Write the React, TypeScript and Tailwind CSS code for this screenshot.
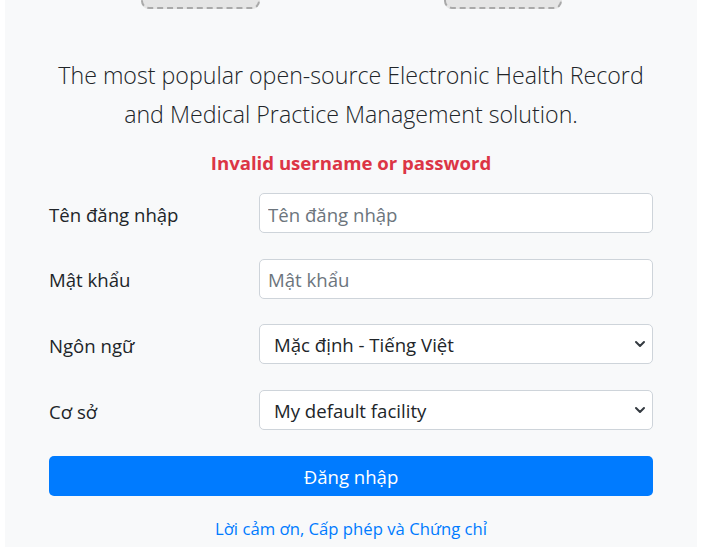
import { ChevronDown } from 'lucide-react';

const font = { fontFamily: '"Open Sans", "Noto Sans", sans-serif' };

function Field({ label, placeholder }: { label: string; placeholder: string }) {
    return (
        <div className="flex items-center h-[40px]">
            <label className="w-[210px] shrink-0 pt-[3px] text-[18.6px] text-[#212529]">{label}</label>
            <input
                className="flex-1 h-full bg-white border border-[#ced4da] rounded-[5px] pl-[8px] pt-[2px] text-[18.6px] text-[#495057] placeholder:text-[#6c757d] outline-none"
                placeholder={placeholder}
            />
        </div>
    );
}

function Select({ label, value }: { label: string; value: string }) {
    return (
        <div className="flex items-center h-[40px]">
            <label className="w-[210px] shrink-0 pt-[3px] text-[18.6px] text-[#212529]">{label}</label>
            <div className="relative flex-1 h-full">
                <select className="w-full h-full appearance-none bg-white border border-[#ced4da] rounded-[5px] pl-[14px] pt-[2px] text-[18.6px] text-[#212529] outline-none">
                    <option>{value}</option>
                </select>
                <ChevronDown className="absolute right-[5px] top-[12px] w-[16px] h-[16px] text-[#343a40] pointer-events-none" strokeWidth={3} />
            </div>
        </div>
    );
}

export default function App() {
    return (
        <div className="min-h-screen bg-white px-[5px]" style={font}>
            <div className="min-h-[547px] bg-[#f8f9fa] overflow-hidden">
                {/* logo placeholders, top cut off */}
                <div className="flex justify-center gap-[184px] -mt-[51px]">
                    <div className="w-[119px] h-[60px] bg-[#e5e5e5] border-2 border-dashed border-[#a9a9a9] rounded-[8px]" />
                    <div className="w-[118px] h-[60px] bg-[#e5e5e5] border-2 border-dashed border-[#a9a9a9] rounded-[8px]" />
                </div>

                <p className="mt-[47px] text-center text-[23.2px] leading-[39px] font-light text-[#212529]">
                    The most popular open-source Electronic Health Record
                    <br />
                    and Medical Practice Management solution.
                </p>

                <p className="mt-[15px] text-center text-[18.6px] leading-[27px] font-bold text-[#dc3545]">
                    Invalid username or password
                </p>

                <form className="mx-[44px] mt-[17px] flex flex-col gap-[25.7px]">
                    <Field label="Tên đăng nhập" placeholder="Tên đăng nhập" />
                    <Field label="Mật khẩu" placeholder="Mật khẩu" />
                    <Select label="Ngôn ngữ" value="Mặc định - Tiếng Việt" />
                    <Select label="Cơ sở" value="My default facility" />
                    <button
                        type="button"
                        className="h-[40px] pt-[2px] bg-[#007bff] text-white text-[18.6px] rounded-[5px]"
                    >
                        Đăng nhập
                    </button>
                </form>

                <div className="mt-[19px] text-center text-[16.7px] leading-[28px]">
                    <a className="text-[#007bff]">Lời cảm ơn, Cấp phép và Chứng chỉ</a>
                </div>
            </div>
        </div>
    );
}
